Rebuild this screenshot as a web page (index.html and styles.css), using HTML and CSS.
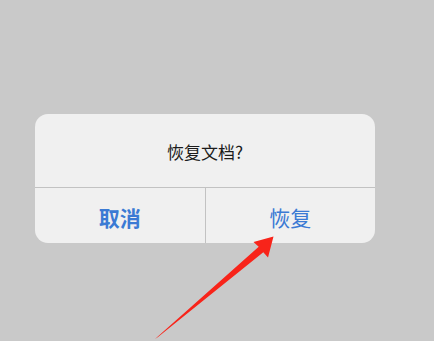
FILE: index.html
```html
<!DOCTYPE html>
<html lang="zh">
<head>
<meta charset="utf-8">
<link rel="stylesheet" href="styles.css">
</head>
<body>
<div class="screen">
  <div class="dialog">
    <div class="title">恢复文档?</div>
    <div class="actions">
      <div class="btn cancel">取消</div>
      <div class="btn ok">恢复</div>
    </div>
  </div>
  <svg class="arrow" width="434" height="341" viewBox="0 0 434 341">
    <polygon points="155,339 158,337 263.3,252.2 268,257.5 273.5,236.5 253.5,242 258.7,246.8" fill="#f8241a"/>
  </svg>
</div>
</body>
</html>
```
FILE: styles.css
```css
html, body {
  margin: 0;
  padding: 0;
  background: #c9c9c9;
}
.screen {
  position: relative;
  width: 434px;
  height: 341px;
  overflow: hidden;
  padding-top: 114px;
  box-sizing: border-box;
  font-family: "Noto Sans CJK SC", "Noto Sans", sans-serif;
}
.dialog {
  margin-left: 35px;
  width: 340px;
  height: 129px;
  background: #f0f0f0;
  border-radius: 13px;
  display: flex;
  flex-direction: column;
  overflow: hidden;
}
.title {
  height: 74px;
  display: flex;
  align-items: center;
  justify-content: center;
  font-size: 17px;
  color: #1c1c1c;
  border-bottom: 1px solid #c2c2c2;
  box-sizing: border-box;
  padding-top: 2px;
}
.actions {
  flex: 1;
  display: flex;
}
.btn {
  flex: 1;
  display: flex;
  align-items: center;
  justify-content: center;
  font-size: 21px;
  color: #3b7ad4;
  padding-top: 2px;
}
.cancel {
  font-weight: 700;
  border-right: 1px solid #c2c2c2;
}
.ok {
  font-weight: 400;
}
.arrow {
  position: absolute;
  left: 0;
  top: 0;
}
```
